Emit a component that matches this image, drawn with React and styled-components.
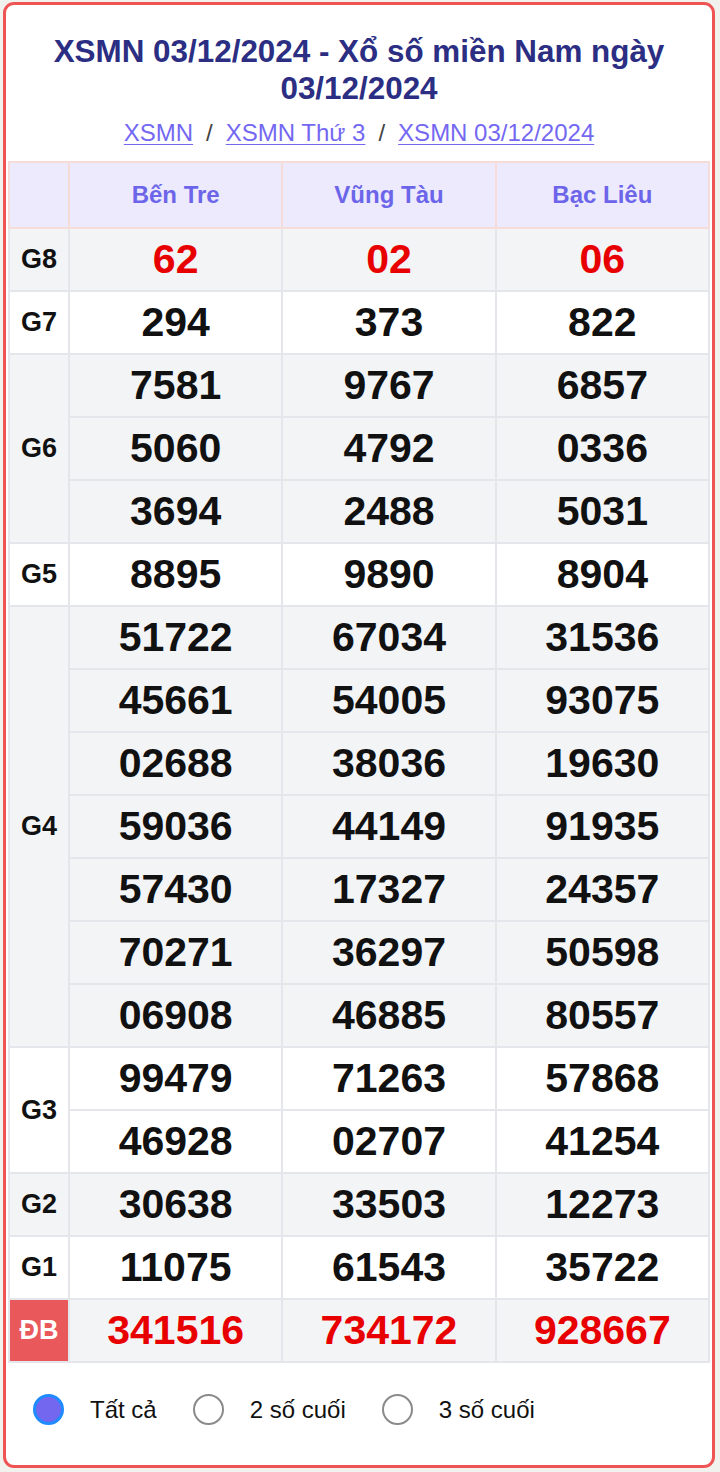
import React from "react";
import styled, { createGlobalStyle } from "styled-components";

const Global = createGlobalStyle`
  html, body { margin: 0; padding: 0; background: #f1f1ee; }
  body { font-family: "Liberation Sans", Arial, sans-serif; }
`;

const Card = styled.div`
  margin: 2px 5px 5px 3px;
  border: 3px solid #ef5454;
  border-radius: 11px;
  background: #fff;
  padding: 0 2px;
  overflow: hidden;
`;

const Head = styled.div`
  padding: 28px 4px 0;
  text-align: center;
`;

const Title = styled.h1`
  margin: 0;
  font-size: 31.4px;
  line-height: 37px;
  font-weight: 700;
  color: #2b2e82;
`;

const Crumbs = styled.div`
  margin-top: 12px;
  font-size: 24px;
  line-height: 28px;
  color: #444;
  display: flex;
  justify-content: center;
  gap: 13px;
`;

const Crumb = styled.a`
  color: #7468f2;
  text-decoration: underline;
  text-decoration-color: #7468f2;
  text-underline-offset: 3px;
  text-decoration-thickness: 1px;
`;

const Sp = styled.span`
  color: #222;
  text-decoration: underline;
  text-decoration-color: #222;
`;

const Table = styled.table`
  margin-top: 14px;
  width: 100%;
  border-collapse: collapse;
  table-layout: fixed;
`;

const HeadCell = styled.th`
  height: 64px;
  padding: 0;
  background: #eceafc;
  border: 2px solid #f6dcd8;
  color: #6c65ea;
  font-size: 24px;
  font-weight: 700;
`;

const Row = styled.tr`
  background: ${(p) => (p.$alt ? "#f3f4f6" : "#ffffff")};
`;

const Label = styled.td`
  padding: 0;
  text-align: center;
  font-size: 27px;
  font-weight: 700;
  color: ${(p) => (p.$special ? "#ffffff" : "#111")};
  background: ${(p) => (p.$special ? "#e9585b" : "transparent")};
  border: 2px solid #e4e6ec;
`;

const Num = styled.td`
  height: 61px;
  padding: 0;
  text-align: center;
  font-size: 41px;
  font-weight: 700;
  color: ${(p) => (p.$red ? "#e80000" : "#111")};
  border-left: 2px solid #e4e6ec;
  border-right: 2px solid #e4e6ec;
  border-top: ${(p) => (p.$inner ? "1px solid #eceef2" : "2px solid #e4e6ec")};
  border-bottom: 2px solid #e4e6ec;
`;

const Radios = styled.div`
  display: flex;
  align-items: center;
  padding: 31px 0 40px 25px;
  gap: 36px;
`;

const RadioItem = styled.label`
  display: flex;
  align-items: center;
  gap: 26px;
  font-size: 24px;
  color: #111;
`;

const Circle = styled.span`
  width: 31px;
  height: 31px;
  box-sizing: border-box;
  border-radius: 50%;
  border: ${(p) => (p.$on ? "3px solid #1f8bff" : "2px solid #8a8a8a")};
  background: ${(p) => (p.$on ? "#7367f0" : "#fff")};
  display: inline-block;
`;

const groups = [
  { name: "G8", red: true, rows: [["62", "02", "06"]] },
  { name: "G7", rows: [["294", "373", "822"]] },
  {
    name: "G6",
    rows: [
      ["7581", "9767", "6857"],
      ["5060", "4792", "0336"],
      ["3694", "2488", "5031"],
    ],
  },
  { name: "G5", rows: [["8895", "9890", "8904"]] },
  {
    name: "G4",
    rows: [
      ["51722", "67034", "31536"],
      ["45661", "54005", "93075"],
      ["02688", "38036", "19630"],
      ["59036", "44149", "91935"],
      ["57430", "17327", "24357"],
      ["70271", "36297", "50598"],
      ["06908", "46885", "80557"],
    ],
  },
  {
    name: "G3",
    rows: [
      ["99479", "71263", "57868"],
      ["46928", "02707", "41254"],
    ],
  },
  { name: "G2", rows: [["30638", "33503", "12273"]] },
  { name: "G1", rows: [["11075", "61543", "35722"]] },
  { name: "ĐB", red: true, special: true, rows: [["341516", "734172", "928667"]] },
];

export default function App() {
  return (
    <>
      <Global />
      <Card>
        <Head>
          <Title>
            XSMN 03/12/2024 - Xổ số miền Nam ngày
            <br />
            03/12/2024
          </Title>
          <Crumbs>
            <Crumb href="#">XSMN<Sp> </Sp></Crumb>
            <span>/</span>
            <Crumb href="#">XSMN Thứ 3<Sp> </Sp></Crumb>
            <span>/</span>
            <Crumb href="#">XSMN 03/12/2024</Crumb>
          </Crumbs>
        </Head>
        <Table>
          <colgroup>
            <col style={{ width: "60px" }} />
            <col />
            <col />
            <col />
          </colgroup>
          <thead>
            <tr>
              <HeadCell />
              <HeadCell>Bến Tre</HeadCell>
              <HeadCell>Vũng Tàu</HeadCell>
              <HeadCell>Bạc Liêu</HeadCell>
            </tr>
          </thead>
          <tbody>
            {groups.map((g, gi) =>
              g.rows.map((r, ri) => (
                <Row key={g.name + ri} $alt={gi % 2 === 0}>
                  {ri === 0 && (
                    <Label rowSpan={g.rows.length} $special={g.special}>
                      {g.name}
                    </Label>
                  )}
                  {r.map((n, ci) => (
                    <Num key={ci} $red={g.red} $inner={ri > 0}>
                      {n}
                    </Num>
                  ))}
                </Row>
              ))
            )}
          </tbody>
        </Table>
        <Radios>
          <RadioItem>
            <Circle $on />
            Tất cả
          </RadioItem>
          <RadioItem>
            <Circle />2 số cuối
          </RadioItem>
          <RadioItem>
            <Circle />3 số cuối
          </RadioItem>
        </Radios>
      </Card>
    </>
  );
}
